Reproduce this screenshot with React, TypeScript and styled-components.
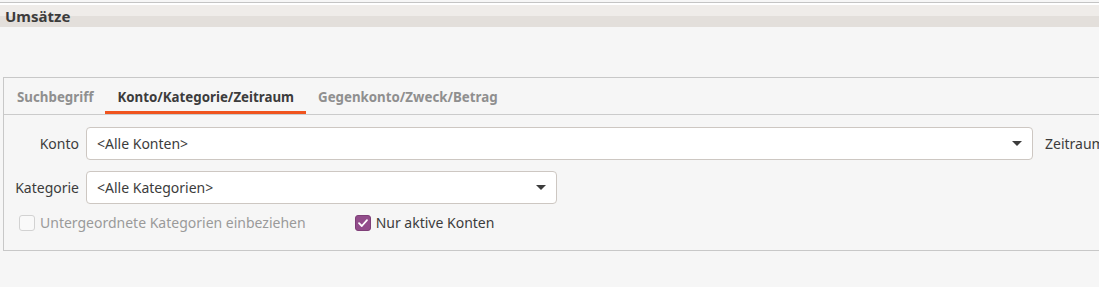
import React from 'react';
import styled, { createGlobalStyle } from 'styled-components';

const GlobalStyle = createGlobalStyle`
  html, body {
    margin: 0;
    padding: 0;
    background: #f6f6f6;
    font-family: "Noto Sans", "DejaVu Sans", sans-serif;
    color: #3c3c3c;
    overflow: hidden;
  }
`;

const Window = styled.div`
  width: 1099px;
  height: 287px;
  padding-top: 2px;
  box-sizing: border-box;
`;

const TopRule = styled.div`
  height: 1px;
  background: #c4c4c4;
  border-bottom: 2px solid #ffffff;
`;

const TitleBar = styled.div`
  height: 22px;
  display: flex;
  align-items: center;
  padding-left: 5px;
  background: linear-gradient(#efece9 0, #efece9 50%, #e3dfdb 50%, #e3dfdb 100%);
  font-size: 15px;
  font-weight: 700;
  color: #3c3c3c;
`;

const Panel = styled.section`
  margin: 50px -20px 0 3px;
  height: 174px;
  box-sizing: border-box;
  border: 1px solid #c8c8c8;
  border-right: none;
  display: flex;
  flex-direction: column;
`;

const TabBar = styled.nav`
  height: 37px;
  box-sizing: border-box;
  display: flex;
  align-items: stretch;
  padding-left: 1px;
  border-bottom: 1px solid #cbcbcb;
`;

const Tab = styled.div<{ $active?: boolean }>`
  display: flex;
  align-items: center;
  padding: 1px 12px 0;
  font-size: 13.3px;
  font-weight: 700;
  color: ${({ $active }) => ($active ? '#3c3c3c' : '#8f8f8f')};
  box-shadow: ${({ $active }) => ($active ? 'inset 0 -3px 0 #f0541e' : 'none')};
`;

const Body = styled.div`
  padding: 12px 0 0 10px;
  display: flex;
  flex-direction: column;
  gap: 11px;
`;

const Row = styled.div`
  display: flex;
  align-items: center;
  gap: 7px;
`;

const Label = styled.label`
  width: 65px;
  text-align: right;
  font-size: 14px;
  color: #3c3c3c;
`;

const Combo = styled.div<{ $width: number }>`
  width: ${({ $width }) => $width}px;
  height: 33px;
  box-sizing: border-box;
  background: #ffffff;
  border: 1px solid #cdc7c2;
  border-radius: 4px;
  display: flex;
  align-items: center;
  justify-content: space-between;
  padding: 0 10px;
  font-size: 14px;
  color: #3c3c3c;
`;

const Arrow = styled.span`
  width: 0;
  height: 0;
  border-left: 5px solid transparent;
  border-right: 5px solid transparent;
  border-top: 5px solid #3c3c3c;
`;

const SideLabel = styled.span`
  font-size: 14px;
  color: #3c3c3c;
  margin-left: 5px;
  white-space: nowrap;
`;

const CheckRow = styled.div`
  display: flex;
  align-items: center;
  margin-top: -2px;
  padding-left: 5px;
`;

const Check = styled.label<{ $disabled?: boolean; $offset?: number }>`
  display: flex;
  align-items: center;
  gap: 5px;
  margin-left: ${({ $offset }) => $offset ?? 0}px;
  font-size: 14px;
  color: ${({ $disabled }) => ($disabled ? '#9a9a9a' : '#3c3c3c')};
`;

const Box = styled.span<{ $checked?: boolean }>`
  width: 16px;
  height: 16px;
  box-sizing: border-box;
  border-radius: 3px;
  display: flex;
  align-items: center;
  justify-content: center;
  background: ${({ $checked }) => ($checked ? '#924d8b' : '#f9f9f9')};
  border: 1px solid ${({ $checked }) => ($checked ? '#7f3f78' : '#d2d2d2')};
`;

const CheckMark = () => (
  <svg width="12" height="12" viewBox="0 0 12 12">
    <path d="M2 6.2 L4.8 9 L10 3.2" fill="none" stroke="#fff" strokeWidth="1.8" strokeLinecap="round" strokeLinejoin="round" />
  </svg>
);

export default function App() {
  return (
    <Window>
      <GlobalStyle />
      <TopRule />
      <TitleBar>Umsätze</TitleBar>
      <Panel>
        <TabBar>
          <Tab>Suchbegriff</Tab>
          <Tab $active>Konto/Kategorie/Zeitraum</Tab>
          <Tab>Gegenkonto/Zweck/Betrag</Tab>
        </TabBar>
        <Body>
          <Row>
            <Label>Konto</Label>
            <Combo $width={947}>
              &lt;Alle Konten&gt;
              <Arrow />
            </Combo>
            <SideLabel>Zeitraum</SideLabel>
          </Row>
          <Row>
            <Label>Kategorie</Label>
            <Combo $width={471}>
              &lt;Alle Kategorien&gt;
              <Arrow />
            </Combo>
          </Row>
          <CheckRow>
            <Check $disabled>
              <Box />
              Untergeordnete Kategorien einbeziehen
            </Check>
            <Check $offset={49}>
              <Box $checked>
                <CheckMark />
              </Box>
              Nur aktive Konten
            </Check>
          </CheckRow>
        </Body>
      </Panel>
    </Window>
  );
}
